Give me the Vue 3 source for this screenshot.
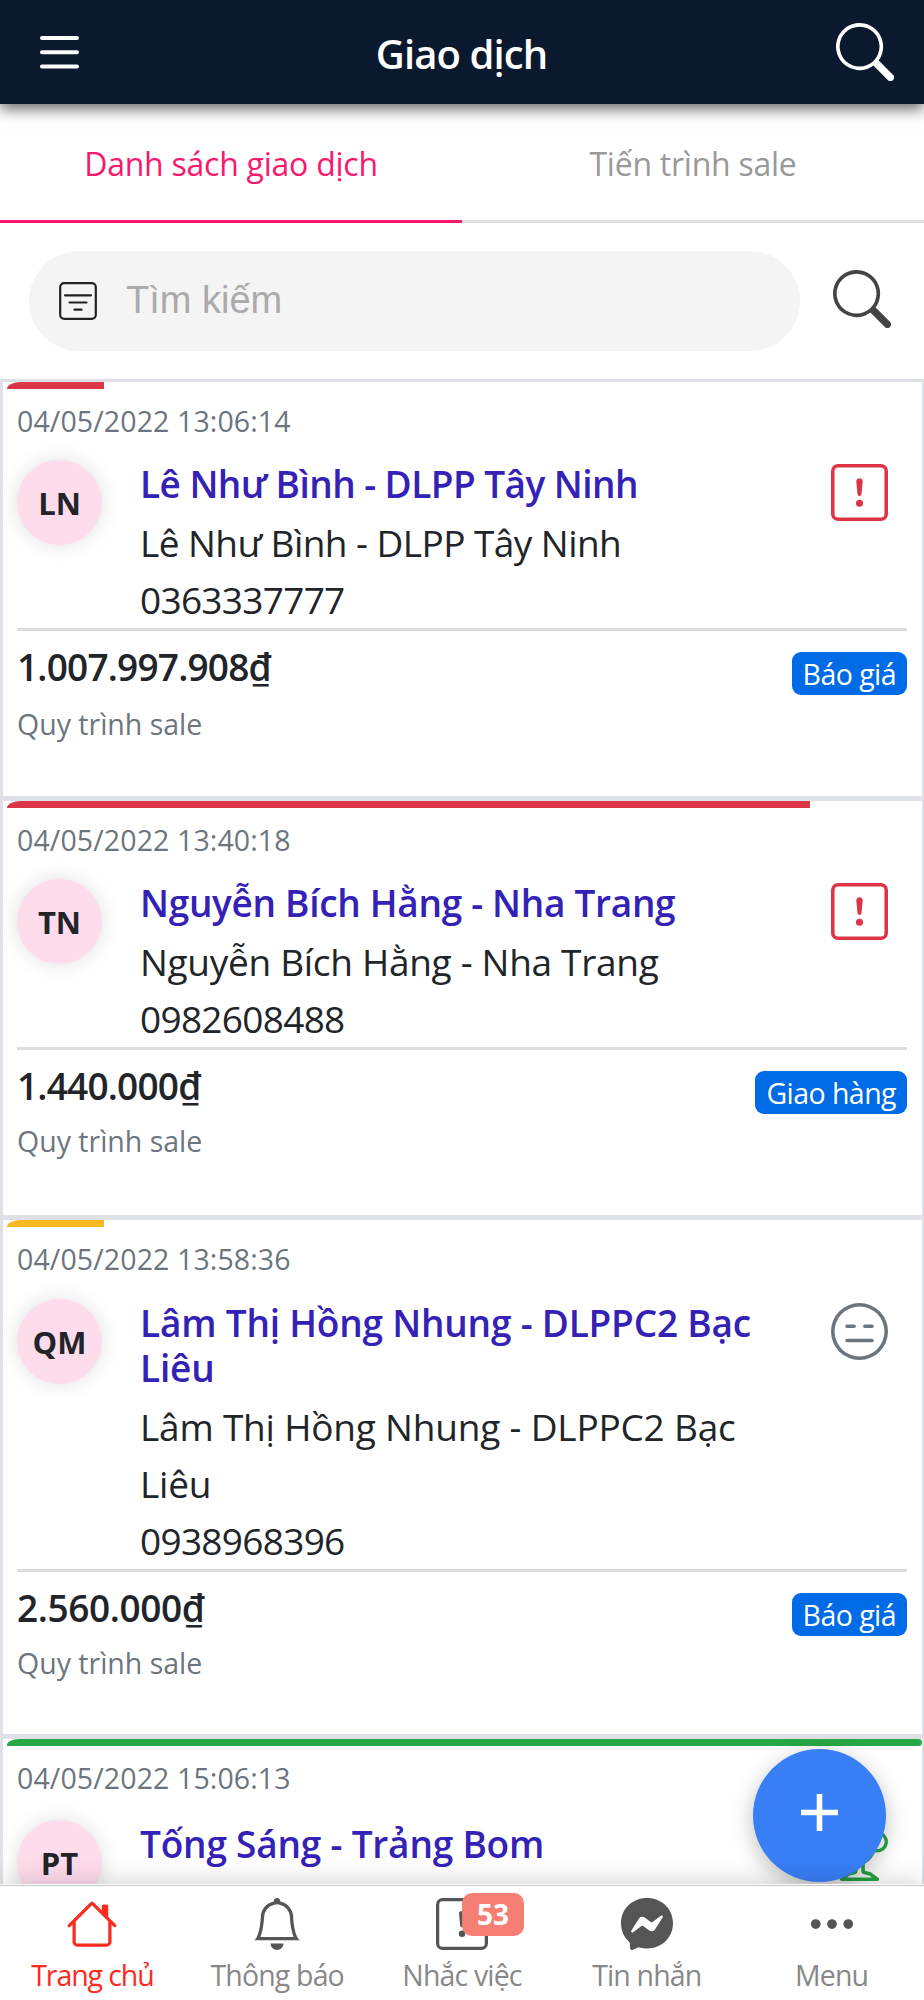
<template>
  <div class="app">
    <header class="topbar">
      <button class="icon-btn menu-btn" aria-label="Menu">
        <svg viewBox="0 0 40 34" fill="none" stroke="currentColor" stroke-width="4" stroke-linecap="round">
          <path d="M3 3h35M3 17.200h35M3 31.400h35" />
        </svg>
      </button>
      <h1>Giao dịch</h1>
      <button class="icon-btn" aria-label="Tìm kiếm">
        <svg viewBox="0 0 16 16" fill="currentColor"><path :d="icons.search" /></svg>
      </button>
    </header>

    <nav class="tabs">
      <button
        v-for="tab in tabs"
        :key="tab"
        class="tab"
        :class="{ active: tab === activeTab }"
        @click="activeTab = tab"
      ><span>{{ tab }}</span></button>
    </nav>

    <div class="search-row">
      <label class="search-box">
        <svg class="filter-icon" viewBox="0 0 38 38" fill="none" stroke="currentColor" stroke-width="2.2" stroke-linecap="round">
          <rect x="1.200" y="1.200" width="35.600" height="35.600" rx="4" />
          <path d="M6 13.300h26M10.500 20.500h17M15.500 27.700h7" />
        </svg>
        <input v-model="keyword" type="text" placeholder="Tìm kiếm" />
      </label>
      <button class="icon-btn dark" aria-label="Tìm kiếm">
        <svg viewBox="0 0 16 16" fill="currentColor"><path :d="icons.search" /></svg>
      </button>
    </div>

    <!-- Deal list -->
    <main class="deals">
      <article v-for="deal in deals" :key="deal.time" class="deal">
        <div class="progress">
          <div class="progress-bar" :class="deal.level" :style="{ width: deal.progress + '%' }" />
        </div>
        <div class="deal-time">{{ deal.time }}</div>
        <div class="deal-body">
          <div class="avatar">{{ deal.initials }}</div>
          <div class="deal-info">
            <h2>{{ deal.name }}</h2>
            <template v-if="deal.phone">
              <p class="contact">{{ deal.name }}</p>
              <p class="phone">{{ deal.phone }}</p>
            </template>
          </div>
          <svg class="status" :class="deal.icon" viewBox="0 0 16 16" fill="currentColor">
            <path v-for="d in icons[deal.icon]" :key="d" fill-rule="evenodd" :d="d" />
          </svg>
        </div>
        <div v-if="deal.amount" class="deal-foot">
          <div>
            <div class="amount">{{ deal.amount }}₫</div>
            <div class="pipeline">Quy trình sale</div>
          </div>
          <span class="stage">{{ deal.stage }}</span>
        </div>
      </article>
    </main>

    <button class="fab" aria-label="Thêm giao dịch">
      <svg viewBox="0 0 37 37" fill="none" stroke="currentColor" stroke-width="5.600"><path d="M18.500 0v37M0 18.500h37" /></svg>
    </button>

    <footer class="bottom-nav">
      <a v-for="item in navItems" :key="item.label" class="nav-item" :class="{ active: item.active }">
        <span class="nav-icon">
          <svg viewBox="0 0 16 16" fill="currentColor">
            <path v-for="d in icons[item.icon]" :key="d" fill-rule="evenodd" :d="d" />
          </svg>
          <span v-if="item.count" class="count">{{ item.count }}</span>
        </span>
        <span class="nav-label">{{ item.label }}</span>
      </a>
    </footer>
  </div>
</template>

<script setup>
import { ref } from 'vue'

const tabs = ['Danh sách giao dịch', 'Tiến trình sale']
const activeTab = ref(tabs[0])
const keyword = ref('')

const deals = [
  { time: '04/05/2022 13:06:14', initials: 'LN', name: 'Lê Như Bình - DLPP Tây Ninh', phone: '0363337777', amount: '1.007.997.908', stage: 'Báo giá', progress: 10.6, level: 'danger', icon: 'alert' },
  { time: '04/05/2022 13:40:18', initials: 'TN', name: 'Nguyễn Bích Hằng - Nha Trang', phone: '0982608488', amount: '1.440.000', stage: 'Giao hàng', progress: 87.8, level: 'danger', icon: 'alert' },
  { time: '04/05/2022 13:58:36', initials: 'QM', name: 'Lâm Thị Hồng Nhung - DLPPC2 Bạc Liêu', phone: '0938968396', amount: '2.560.000', stage: 'Báo giá', progress: 10.6, level: 'warning', icon: 'neutral' },
  { time: '04/05/2022 15:06:13', initials: 'PT', name: 'Tống Sáng - Trảng Bom', progress: 100, level: 'success', icon: 'trophy' }
]

const navItems = [
  { label: 'Trang chủ', icon: 'home', active: true },
  { label: 'Thông báo', icon: 'bell' },
  { label: 'Nhắc việc', icon: 'alert', count: 53 },
  { label: 'Tin nhắn', icon: 'messenger' },
  { label: 'Menu', icon: 'dots' }
]

const icons = {
  search: 'M11.742 10.344a6.500 6.500 0 1 0-1.397 1.398h-.001c.030.040.062.078.098.115l3.850 3.850a1 1 0 0 0 1.415-1.414l-3.850-3.850a1.007 1.007 0 0 0-.115-.100zM12 6.500a5.500 5.500 0 1 1-11 0 5.500 5.500 0 0 1 11 0z',
  alert: [
    'M14 1a1 1 0 0 1 1 1v12a1 1 0 0 1-1 1H2a1 1 0 0 1-1-1V2a1 1 0 0 1 1-1h12zM2 0a2 2 0 0 0-2 2v12a2 2 0 0 0 2 2h12a2 2 0 0 0 2-2V2a2 2 0 0 0-2-2H2z',
    'M7.002 11a1 1 0 1 1 2 0 1 1 0 0 1-2 0zM7.100 4.995a.905.905 0 1 1 1.800 0l-.350 3.507a.552.552 0 0 1-1.100 0L7.100 4.995z'
  ],
  neutral: [
    'M8 15A7 7 0 1 1 8 1a7 7 0 0 1 0 14zm0 1A8 8 0 1 0 8 0a8 8 0 0 0 0 16z',
    'M4 10.500a.500.500 0 0 1 .500-.500h7a.500.500 0 0 1 0 1h-7a.500.500 0 0 1-.500-.500zm0-4a.500.500 0 0 1 .500-.500h2a.500.500 0 0 1 0 1h-2a.500.500 0 0 1-.500-.500zm5 0a.500.500 0 0 1 .500-.500h2a.500.500 0 0 1 0 1h-2a.500.500 0 0 1-.500-.500z'
  ],
  trophy: [
    'M2.500.500A.500.500 0 0 1 3 0h10a.500.500 0 0 1 .500.500c0 .538-.012 1.050-.034 1.536a3 3 0 1 1-1.133 5.890c-.790 1.865-1.878 2.777-2.833 3.011v2.173l1.425.356c.194.048.377.135.537.255L13.300 15.100a.500.500 0 0 1-.300.900H3a.500.500 0 0 1-.300-.900l1.838-1.379c.160-.120.343-.207.537-.255L6.500 13.110v-2.173c-.955-.234-2.043-1.146-2.833-3.012a3 3 0 1 1-1.132-5.890A33.076 33.076 0 0 1 2.500.500zm.099 2.540a2 2 0 0 0 .720 3.935c-.333-1.050-.588-2.346-.720-3.935zm10.083 3.935a2 2 0 0 0 .720-3.935c-.133 1.590-.388 2.885-.720 3.935zM3.504 1c.007.517.026 1.006.056 1.469.130 2.028.457 3.546.870 4.667C5.294 9.480 6.484 10 7 10a.500.500 0 0 1 .500.500v2.610a1 1 0 0 1-.757.970l-1.426.356a.500.500 0 0 0-.179.085L4.500 15h7l-.638-.479a.501.501 0 0 0-.180-.085l-1.425-.356a1 1 0 0 1-.757-.970V10.500A.500.500 0 0 1 9 10c.516 0 1.706-.520 2.570-2.864.413-1.120.740-2.640.870-4.667.030-.463.049-.952.056-1.469H3.504z'
  ],
  home: [
    'M2 13.500V7h1v6.500a.500.500 0 0 0 .500.500h9a.500.500 0 0 0 .500-.500V7h1v6.500a1.500 1.500 0 0 1-1.500 1.500h-9A1.500 1.500 0 0 1 2 13.500zm11-11V6l-2-2V2.500a.500.500 0 0 1 .500-.500h1a.500.500 0 0 1 .500.500z',
    'M7.293 1.500a1 1 0 0 1 1.414 0l6.647 6.646a.500.500 0 0 1-.708.708L8 2.207 1.354 8.854a.500.500 0 1 1-.708-.708L7.293 1.500z'
  ],
  bell: [
    'M8 16a2 2 0 0 0 2-2H6a2 2 0 0 0 2 2zM8 1.918l-.797.161A4.002 4.002 0 0 0 4 6c0 .628-.134 2.197-.459 3.742-.160.767-.376 1.566-.663 2.258h10.244c-.287-.692-.502-1.490-.663-2.258C12.134 8.197 12 6.628 12 6a4.002 4.002 0 0 0-3.203-3.920L8 1.917zM14.220 12c.223.447.481.801.780 1H1c.299-.199.557-.553.780-1C2.680 10.200 3 6.880 3 6c0-2.420 1.720-4.440 4.005-4.901a1 1 0 1 1 1.990 0A5.002 5.002 0 0 1 13 6c0 .880.320 4.200 1.220 6z'
  ],
  messenger: [
    'M0 7.760C0 3.301 3.493 0 8 0s8 3.301 8 7.760-3.493 7.760-8 7.760c-.810 0-1.586-.107-2.316-.307a.639.639 0 0 0-.427.030l-1.588.702a.640.640 0 0 1-.898-.566l-.044-1.423a.639.639 0 0 0-.215-.456C.956 12.108 0 10.092 0 7.760zm5.546-1.459-2.350 3.728c-.225.358.214.761.551.506l2.525-1.916a.480.480 0 0 1 .578-.002l1.869 1.402a1.200 1.200 0 0 0 1.735-.320l2.350-3.728c.226-.358-.214-.761-.551-.506L9.728 7.381a.480.480 0 0 1-.578.002L7.281 5.980a1.200 1.200 0 0 0-1.735.320z'
  ],
  dots: [
    'M3 9.500a1.500 1.500 0 1 1 0-3 1.500 1.500 0 0 1 0 3zm5 0a1.500 1.500 0 1 1 0-3 1.500 1.500 0 0 1 0 3zm5 0a1.500 1.500 0 1 1 0-3 1.500 1.500 0 0 1 0 3z'
  ]
}
</script>

<style>
body {
  margin: 0;
  background: #fff;
}
</style>

<style scoped>
.app {
  position: relative;
  display: flex;
  flex-direction: column;
  height: 100vh;
  overflow: hidden;
  font-family: "Open Sans", "Noto Sans", sans-serif;
  color: #212529;
  background: #fff;
}
.app * { box-sizing: border-box; }
button {
  border: none;
  padding: 0;
  background: none;
  font: inherit;
  color: inherit;
}
svg { display: block; }
h1, h2, p { margin: 0; }

/* ─── Top bar ─────────────────────────────────────────────────────── */
.topbar {
  position: relative;
  z-index: 2;
  flex: none;
  display: flex;
  align-items: center;
  justify-content: space-between;
  height: 104px;
  padding: 0 30px 0 39px;
  background: #0a192d;
  color: #fff;
  box-shadow: 0 5px 14px rgba(0, 0, 0, 0.6);
}
.topbar h1 {
  padding: 4px 10px 0 0;
  font-size: 40px;
  line-height: 56px;
  font-weight: 600;
  letter-spacing: -0.900px;
}
.icon-btn { width: 58px; height: 58px; }
.icon-btn svg { width: 58px; height: 58px; }
.menu-btn svg { width: 40px; height: 34px; }
.dark {
  margin-bottom: 5px;
  color: #444;
}

/* ─── Tabs ────────────────────────────────────────────────────────── */
.tabs {
  flex: none;
  display: flex;
  height: 119px;
}
.tab {
  flex: 1;
  padding-top: 3px;
  border-bottom: 3px solid #e0e0e0;
  font-size: 32px;
  line-height: 44px;
  letter-spacing: -0.250px;
  color: #999;
}
.tab.active {
  color: #f9186f;
  border-color: #f9186f;
}

/* ─── Search ──────────────────────────────────────────────────────── */
.search-row {
  flex: none;
  display: flex;
  align-items: center;
  gap: 33px;
  height: 156px;
  padding: 0 33px 0 29px;
}
.search-box {
  flex: 1;
  display: flex;
  align-items: center;
  gap: 29px;
  height: 100px;
  padding: 0 30px;
  border-radius: 50px;
  background: #f4f4f4;
}
.filter-icon { width: 38px; height: 38px; color: #222; }
.search-box input {
  flex: 1;
  min-width: 0;
  border: none;
  outline: none;
  padding: 0 0 2px;
  background: none;
  font: 38px "Liberation Sans", Arial, sans-serif;
}
.search-box input::placeholder { color: #aaa; }

/* ─── Deals ───────────────────────────────────────────────────────── */
.deals {
  flex: 1;
  min-height: 0;
  overflow: hidden;
  border: solid #dee2e6;
  border-width: 3px 2px 0 3px;
}
.deal { border-bottom: 5px solid #dee2e6; }
.progress {
  height: 7px;
  padding-left: 4px;
}
.progress-bar {
  height: 7px;
  border-radius: 14px 0 0 0 / 7px 0 0 0;
}
.danger { background: #dc3545; }
.warning { background: #fbb91f; }
.success { background: #28a745; border-radius: 14px 4px 4px 0 / 7px 4px 4px 0; }

.deal-time {
  margin-top: 10px;
  padding-left: 14px;
  font-size: 28.500px;
  line-height: 45px;
  letter-spacing: 0.120px;
  color: #6c757d;
}
.deal-body {
  display: flex;
  align-items: flex-start;
  margin: 0 15px 0 14px;
  padding-top: 16px;
  border-bottom: 3px solid #dcdddf;
}
.avatar {
  flex: none;
  display: flex;
  align-items: center;
  justify-content: center;
  width: 85px;
  height: 85px;
  border-radius: 50%;
  background: #ffdcec;
  box-shadow: 0 0 20px rgba(0, 0, 0, 0.13);
  font-size: 31px;
  font-weight: 700;
}
.deal-info {
  flex: none;
  width: 650px;
  margin-left: 38px;
  padding-top: 1px;
  letter-spacing: -0.300px;
}
.deal:first-child .deal-info { letter-spacing: -0.550px; }
.deal:nth-child(n + 3) .deal-info { letter-spacing: -0.200px; }
.deal-info h2 {
  font-size: 37px;
  line-height: 45px;
  font-weight: 600;
  color: #3322b5;
}
.contact,
.phone {
  font-size: 37px;
  line-height: 57px;
}
.contact { margin-top: 8px; }
.phone { letter-spacing: -0.700px; }
.status {
  flex: none;
  width: 57px;
  height: 57px;
  margin: 4px 0 0 41px;
}
.status.alert { color: #dc3545; }
.status.neutral { color: #6c757d; }
.status.trophy { color: #28a745; }

.deal-foot {
  display: flex;
  align-items: flex-start;
  justify-content: space-between;
  height: 165px;
  padding: 7px 15px 0 14px;
}
.deal:nth-child(3) .deal-body { padding-top: 17px; }
.deal:nth-child(3) .deal-foot { height: 162px; }
.deal:nth-child(4) .deal-body { padding-top: 19px; }
.amount {
  font-size: 37px;
  line-height: 57px;
  font-weight: 600;
  letter-spacing: -0.800px;
}
.deal:nth-child(3) .amount { letter-spacing: -0.400px; }
.pipeline {
  margin-top: 5px;
  font-size: 28.500px;
  line-height: 45px;
  color: #6c757d;
}
.deal:first-child .pipeline { margin-top: 7px; }
.stage {
  margin-top: 14px;
  padding: 2px 11px 0;
  border-radius: 9px;
  background: #006be6;
  color: #fff;
  font-size: 28.500px;
  line-height: 41px;
  letter-spacing: -0.550px;
}

/* ─── Floating add button ─────────────────────────────────────────── */
.fab {
  position: absolute;
  right: 38px;
  bottom: 118.500px;
  width: 133px;
  height: 133px;
  border-radius: 50%;
  background: #387ef5;
  color: #fff;
  box-shadow: 0 6px 22px rgba(0, 0, 0, 0.26);
}
.fab svg { width: 37px; height: 37px; margin: -5px auto 0; }

/* ─── Bottom navigation ───────────────────────────────────────────── */
.bottom-nav {
  position: relative;
  flex: none;
  display: flex;
  height: 116px;
  background: #fff;
  border-top: 1px solid #fff;
  box-shadow: inset 0 1px 0 #c4c4c4, 0 0 26px rgba(0, 0, 0, 0.2);
}
.nav-item {
  flex: 1;
  display: flex;
  flex-direction: column;
  align-items: center;
  padding-top: 13px;
  color: #555;
}
.nav-icon { position: relative; }
.nav-icon svg { width: 52px; height: 52px; }
.nav-label {
  margin-top: 3px;
  font-size: 28.500px;
  line-height: 44px;
  letter-spacing: -0.850px;
  color: #888;
}
.nav-item.active,
.active .nav-label { color: #fa2a1e; }
.active .nav-label { letter-spacing: -1.100px; }
.count {
  position: absolute;
  left: 26px;
  top: -5px;
  width: 62px;
  border-radius: 10px;
  background: #f57f75;
  color: #fff;
  font-size: 28px;
  line-height: 43px;
  font-weight: 700;
  text-align: center;
}
</style>
